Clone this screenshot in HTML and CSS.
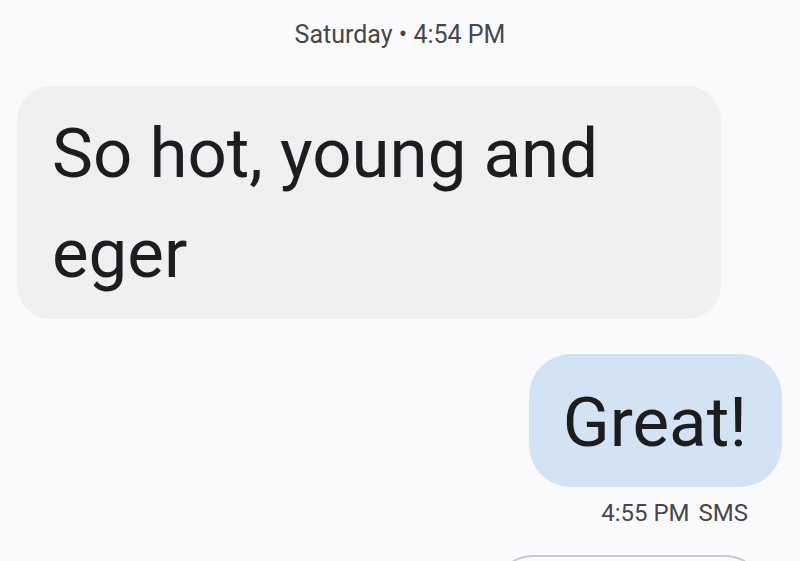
FILE: index.html
```html
<!DOCTYPE html>
<html>
<head>
<meta charset="utf-8">
<link rel="stylesheet" href="styles.css">
</head>
<body>
<div class="thread">
  <div class="date">Saturday • 4:54 PM</div>
  <div class="row in">
    <div class="bubble incoming">So hot, young and eger</div>
  </div>
  <div class="row out">
    <div class="bubble outgoing">Great!</div>
  </div>
  <div class="meta"><span>4:55 PM</span><span>SMS</span></div>
  <div class="row out">
    <div class="bubble outlined"></div>
  </div>
</div>
</body>
</html>
```
FILE: styles.css
```css
html, body {
  margin: 0;
  padding: 0;
  background: #fafafc;
  height: 100%;
  overflow: hidden;
}
.thread {
  display: flex;
  flex-direction: column;
  font-family: Roboto, "Noto Sans", sans-serif;
  color: #1d1d20;
}
.date {
  text-align: center;
  font-size: 25px;
  line-height: 28px;
  color: #474749;
  padding-top: 21px;
  padding-bottom: 37px;
}
.row {
  display: flex;
}
.row.in {
  justify-content: flex-start;
  padding-left: 17px;
}
.row.out {
  justify-content: flex-end;
  padding-right: 18px;
}
.bubble {
  font-size: 69px;
  line-height: 100px;
  box-sizing: border-box;
}
.incoming {
  width: 704px;
  background: #f0f0f3;
  border-radius: 34px;
  padding: 18px 35px 15px 35px;
}
.outgoing {
  margin-top: 35px;
  background: #d3e3f3;
  border-radius: 42px;
  padding: 19px 35px 14px 34px;
}
.meta {
  display: flex;
  justify-content: flex-end;
  gap: 9px;
  padding-right: 52px;
  font-size: 24px;
  line-height: 26px;
  color: #474749;
  padding-top: 13px;
}
.outlined {
  margin-top: 29px;
  margin-right: 17px;
  width: 272px;
  height: 80px;
  border: 2px solid #c8c8cc;
  border-radius: 40px;
  box-sizing: border-box;
}
```
